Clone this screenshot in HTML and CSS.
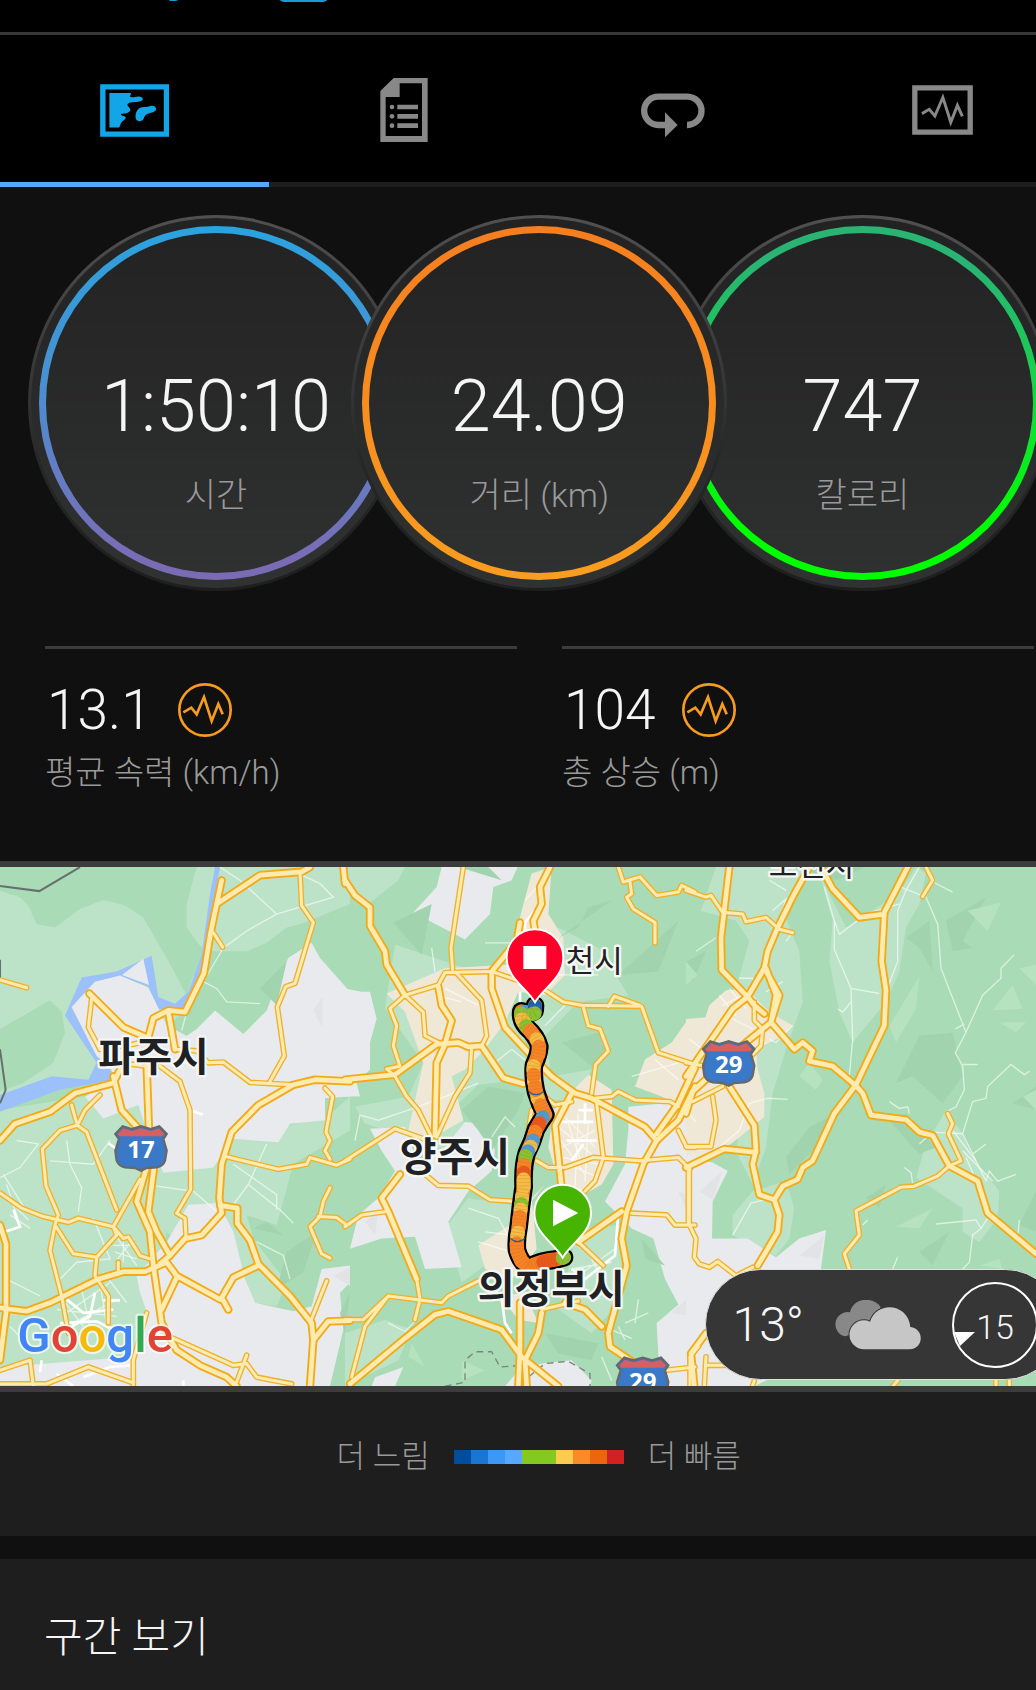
FILE: index.html
```html
<!DOCTYPE html>
<html lang="ko">
<head>
    <meta charset="UTF-8">
    <meta name="viewport" content="width=device-width, initial-scale=1.0">
    <title>활동 상세</title>
    <link rel="stylesheet" href="styles.css">
</head>
<body>
    <header class="top-bar">
        <svg class="top-bar-icons" width="160" height="4" viewBox="0 0 160 4" aria-hidden="true">
            <ellipse cx="4" cy="-1" rx="6" ry="2"/>
            <rect x="110" y="-12" width="49" height="14" rx="5"/>
        </svg>
    </header>

    <nav class="tabs">
        <a href="#map" class="tab active" aria-label="지도">
            <svg width="69" height="53" viewBox="300 252 206 158">
                <path class="line" d="M308.500 260.500h190v141h-190z"/>
                <path class="fill" d="M328 279h64c2 4-3 6-2 12 10 2 18-3 27-2 12 1 14 10 6 14-12 5-30 1-40 8-6 6 10 11 7 20-4 10-18 8-26 10-6 4 6 6 12 9 3 8-8 11-12 17-4 6-4 12-7 15h-29z"/>
                <path class="fill" d="M406 350c0-14 6-24 16-28 12-2 20 0 31-5 10-3 18 7 13 14-6 7-26 8-31 15-5 6-4 17-17 17-8 0-12-5-12-13z"/>
            </svg>
        </a>
        <a href="#stats" class="tab" aria-label="통계">
            <svg width="48" height="64" viewBox="1141 235 142 192">
                <path class="fill" fill-rule="evenodd" d="M1181 235h102v192h-142V274zM1199 251v41h-42v117h109V251z"/>
                <path class="fill" d="M1192 315h62v14h-62zM1192 343h62v14h-62zM1192 371h62v14h-62z"/>
                <circle class="fill" cx="1176" cy="322" r="7"/>
                <circle class="fill" cx="1176" cy="350" r="7"/>
                <circle class="fill" cx="1176" cy="378" r="7"/>
            </svg>
        </a>
        <a href="#laps" class="tab" aria-label="랩">
            <svg width="64" height="54" viewBox="372 250 192 162">
                <path class="loop" d="M446 376h-22a42 42 0 0 1 0-85h88a42 42 0 0 1-2 85"/>
                <path class="fill" d="M444 338l38 38-38 37z"/>
            </svg>
        </a>
        <a href="#charts" class="tab" aria-label="차트">
            <svg width="61" height="50" viewBox="1185 255 184 150">
                <path class="line" d="M1193.500 263.500h167v133h-167z"/>
                <path class="pulse" d="M1215 341l22-13 17 20 24-56 24 75 20-51 15 33"/>
            </svg>
        </a>
    </nav>

    <main>
        <section class="dials">
            <div class="dial dial-time">
                <div class="dial-ring">
                    <div class="dial-value">1:50:10</div>
                    <div class="dial-label">시간</div>
                </div>
            </div>
            <div class="dial dial-distance">
                <div class="dial-ring">
                    <div class="dial-value">24.09</div>
                    <div class="dial-label">거리 (km)</div>
                </div>
            </div>
            <div class="dial dial-calories">
                <div class="dial-ring">
                    <div class="dial-value">747</div>
                    <div class="dial-label">칼로리</div>
                </div>
            </div>
        </section>

        <section class="summary">
            <div class="summary-item">
                <div class="summary-value">
                    13.1
                    <a href="#speed" class="chart-link" aria-label="속력 차트">
                        <svg width="54" height="54" viewBox="527 156 162 162">
                            <circle cx="608" cy="237" r="77"/>
                            <path d="M543 244l24-14 16 20 22-52 23 72 20-51 13 31"/>
                        </svg>
                    </a>
                </div>
                <div class="summary-label">평균 속력 (km/h)</div>
            </div>
            <div class="summary-item">
                <div class="summary-value">
                    104
                    <a href="#ascent" class="chart-link" aria-label="고도 차트">
                        <svg width="54" height="54" viewBox="527 156 162 162">
                            <circle cx="608" cy="237" r="77"/>
                            <path d="M543 244l24-14 16 20 22-52 23 72 20-51 13 31"/>
                        </svg>
                    </a>
                </div>
                <div class="summary-label">총 상승 (m)</div>
            </div>
        </section>

        <section class="map" id="map">
            <svg class="map-canvas" viewBox="0 0 3108 1557" preserveAspectRatio="xMidYMid slice">
                <defs>
                    <!-- road network, drawn twice: casing then core -->
                    <g id="roads-small">
                        <g transform="translate(0 -21) scale(1 1.014)">
                            <path d="M900 35L905 135 940 185 885 365 857 375 832 435 853 580 810 655M640 215L668 258M275 410L265 495 300 560M525 560L590 565 625 600 670 598 750 658 880 665M480 610L540 655 570 740 572 975 530 1045 555 1060 558 1115"/>
                            <path d="M680 878L835 915 920 900 930 880 1010 903 1050 885M975 675L998 700 978 805 990 830 975 860 990 885M0 985L65 1030 130 1055 205 1072 235 1060 340 1085 370 1120 385 1115 420 1170 450 1180M300 695L255 740 232 785 215 725M232 785L180 800 127 855 138 965 175 1050 165 1080M232 785L260 805 350 1035M420 945L340 1085 350 1110 290 1175 220 1165 165 1080 150 1155 185 1290 205 1400M290 1175L285 1230 325 1290 325 1370M355 1190V1218"/>
                            <path d="M0 355L80 378M0 1510L90 1480 100 1557M0 1550L140 1550 265 1500 395 1545M440 1340L400 1480 400 1557M520 1415L700 1495 740 1490 770 1530 875 1550M740 1465L705 1557M980 1245L930 1370M990 970L970 1010 960 1055 930 1085 965 1165 990 1178M955 1055L1010 1058 1040 1080 1050 1075M300 560L400 545 440 535M360 600L440 610"/>
                        </g>
                        <g transform="translate(1035 -21) scale(1 1.014)">
                            <path d="M180 400L235 450 240 520 280 540M355 21L318 260 323 325M135 440L180 400 280 370 300 333 440 330M335 335L410 415 425 520 410 550M135 440L155 490 145 550 165 610 125 618 150 640 185 700 220 740 260 820M380 555L375 630 330 700 275 820"/>
                            <path d="M440 330L500 350 600 385 655 420 710 430 890 433 940 570 1050 605M790 433L808 403 885 430M715 435L730 490 765 500 790 565 752 605 740 690M750 705L800 700 820 685 870 710 975 715 1000 730M820 21L835 65 885 50 935 105 1000 95 1010 75 1050 95M855 65L860 100 845 110 865 145 930 185 930 245"/>
                            <path d="M0 890L150 795 250 830M125 1040L50 1050 0 1085M240 930L280 963 370 965 435 1005 510 1010M600 700L630 725 680 715M560 740L550 800M575 890L610 910 660 910 745 880 885 890M755 720L775 880 750 950 720 980M0 1360L55 1360 130 1290 290 1310 310 1290 400 1245M130 1290L60 1380 20 1530M215 1240L225 1300 210 1360"/>
                            <path d="M700 1130L775 1200M860 1045L965 1050 990 1080 1050 1080M1030 905V1080M885 890L1000 880 1035 915M1000 800L1025 850 1050 850M960 1510L1050 1500M1035 1557V1470L1060 1440M590 1330L700 1305"/>
                        </g>
                        <g transform="translate(2058 -21) scale(1 1.014)">
                            <path d="M0 90L60 110 75 105 110 155 170 160 180 183 240 170 280 205 320 215M205 420V475L230 500 225 550 200 575M720 21L740 60 710 108M785 750L800 780 787 810 825 890 790 905 755 935 685 965 645 968 510 1038 520 1110 475 1165 490 1210M0 848H75L90 770 80 700M20 715L110 670M0 600L60 610"/>
                            <path d="M10 910V1080L30 1120 25 1175 40 1195 70 1205 95 1188 150 1230 200 1205M60 1470L55 1557M60 1495H125M205 1540L195 1570M635 1540L610 1570M930 1540V1570M970 1540V1570"/>
                        </g>
                    </g>
                    <g id="roads-big">
                        <g transform="translate(0 -21) scale(1 1.014)">
                            <path d="M0 830L45 780 150 745 225 690 340 660 360 620M340 640L365 740 430 810M440 610L447 800M440 910L410 1010 450 1100 460 1200 485 1370 530 1450 600 1495 680 1530 710 1557M462 910L445 1040 470 1100 510 1170"/>
                            <path d="M665 60L650 130 632 215 612 335 555 450 505 445 460 468 445 525M650 130L780 45 905 35 930 21M268 395L370 495 440 525M505 450L525 560M1050 655L945 650 880 665 775 725 695 805 665 900 658 1000 665 1045 605 1110 555 1120 510 1170 480 1195M660 1022L712 1030 712 1075 750 1125 775 1195 870 1290 935 1370 940 1420 930 1557M775 1200L700 1235 665 1295 685 1330"/>
                            <path d="M500 1190L530 1230 660 1300M530 1235L485 1330M0 1325L80 1335 150 1310 295 1240 370 1218 435 1218 500 1190M0 1080L18 1135 18 1340 0 1480M940 1420L985 1365 1050 1363M1030 21L1035 70"/>
                        </g>
                        <g transform="translate(1035 -21) scale(1 1.014)">
                            <path d="M0 60L30 105 75 140 75 195 120 270 125 310 180 400M280 375L290 430 320 475 300 545 275 600 270 815M0 650L150 635 275 545 340 540 370 553 410 550 475 645 535 662M615 21L585 80 590 130 565 180 570 210M525 185L515 240 440 330 440 380 480 495 550 570 620 640 690 690 740 705 900 790 935 830 1000 770 1050 670M935 810L1000 720 1050 615"/>
                            <path d="M935 830L895 900 870 970 845 1040 830 1120 845 1200 790 1400 795 1440 870 1490M165 930L110 1000 130 1040 215 1240M680 690L630 785 640 880 650 970M15 1550L180 1415 270 1345 310 1335 470 1390 530 1470 640 1557M525 1310V1450L520 1557M590 1340L580 1400 540 1480 545 1557M700 1130L830 1040M660 1310L720 1330 770 1380"/>
                        </g>
                        <g transform="translate(2058 -21) scale(1 1.014)">
                            <path d="M130 21L105 230 107 325 185 405 205 430 235 455M370 21L325 100 275 200 245 270 235 320 185 405 140 440 0 640M235 320L280 400 255 480 180 540 20 685 0 750M240 320L270 400 255 480 325 560 350 540 380 565 370 595 440 610 510 668 530 690 555 755 660 768 700 805 740 815 790 905 875 950 905 1045 1050 1165"/>
                            <path d="M405 21L440 85 520 170 595 160M665 21L595 155 587 300 600 385 595 490 510 665 445 750 380 890 350 910 335 945 290 965 265 1005M130 670L205 785 210 860 200 900 220 990 265 1005 280 1050 275 1100 215 1200M0 910L115 855 210 865M60 1400L15 1460 25 1557"/>
                        </g>
                    </g>
                    <g id="shield">
                        <path class="shield-body" d="M-77-45L-55-68-28-60 0-68 29-60 55-68 77-45 67-30 77 5 72 35Q66 52 47 55L17 57 0 65-18 57-48 55Q-66 52-73 35L-77 5-66-30z"/>
                        <path class="shield-top" d="M-70-45L-53-62-28-54 0-62 29-54 53-62 70-45 64-38H-64z"/>
                    </g>
                    <path id="pin" d="M0 134C-25 90-85 62-85 0A85 85 0 0 1 85 0C85 62 25 90 0 134z"/>
                    <path id="route" d="M105 76L104 92Q90 104 64 94Q60 118 78 140Q112 170 118 200Q116 225 102 255Q98 290 108 335Q118 370 136 404Q120 426 108 448Q98 485 80 520Q68 560 71 620Q62 680 56 740Q48 780 51 810Q60 845 86 862Q120 842 170 838L192 832"/>
                </defs>

                <rect class="forest" width="3108" height="1557"/>

                <!-- west -->
                <g transform="translate(0 -21) scale(1 1.014)">
                    <path class="meadow" d="M0 90L60 110 85 135 110 190 165 200 240 145 310 118 380 135 430 170 490 250 500 290 540 340 590 345 540 460 300 640 0 740V685L70 660 160 600 195 510 185 450 150 415 0 500zM590 21L560 130V200L600 255 640 270H740L800 245 860 200 900 190 1050 130V21zM0 740L250 700 420 720 500 920 700 820 980 760 1050 700V800L880 900 830 1080 740 1050 760 1120 860 1250 830 1320 700 1300 500 1100 430 1500 0 1557z"/>
                    <path class="forest" d="M590 21L555 130V200L605 260 560 400 500 290 430 170 200 21z"/>
                    <path class="water" d="M645 21H660L640 130 620 300 590 390 560 450 475 440 445 375 365 345 285 360 215 435 290 580 330 620 340 650 180 680 0 745V695L155 640 265 650 290 600 195 460 245 348 350 330 455 283 475 405 525 425 565 390 605 280 630 100z"/>
                    <path class="town" d="M366 340L430 292 447 370zM215 435L285 360 360 342 445 378 475 438 500 490 560 520 590 500 645 445 730 515 800 445 840 340 865 290 935 245 960 290 1050 390V700L975 705V770L870 780 835 835 700 825 640 910 490 925 440 800 415 725 310 765 255 700 345 650 330 610 290 580z"/>
                    <path class="town" d="M565 1020L655 1015 700 1100 735 1240 765 1310 880 1335 935 1320 965 1210 1050 1200V1250L1020 1280 1030 1390 990 1557H0V1500L400 1470 445 1350 420 1280 410 1230 500 1130z"/>
                    <path class="shade" d="M780 380L860 300 830 430zM830 1270L860 1160 950 1100 910 1220zM760 1090L800 1070 850 1110zM1050 1280L1020 1340 1035 1400z"/>
                    <path class="shade-town" d="M940 445L967 405V495zM1000 1230L1050 1205V1260z"/>
                    <path class="border-line" d="M0 77L118 92 240 21M0 295V350M0 560L17 680 0 720"/>
                    <path class="street" d="M660 21L720 60 830 160 740 210 670 260 610 360 650 380 680 420 780 425M830 160L1000 110 960 70 905 45M560 450L545 505M50 830L115 840 60 910 0 940M150 890L280 900 330 830M200 830L210 900 245 970 235 1040M20 1240L120 1290M470 965L580 980 650 1040M700 1020L745 960 800 840M745 960L840 1035 880 1075M770 1130L850 1170 870 1240M700 900L830 990V1035M30 1380L100 1450M10 930L80 1040M340 1100L410 1200M280 1060L330 1180 230 1190 170 1250"/>
                    <path class="street" d="M340 1140H400M345 1160L410 1180M350 1185L400 1120M370 1110V1190M180 1290L250 1380M200 1340L330 1250M220 1370L350 1300M240 1250L270 1380M300 1250L320 1380M170 1330L350 1350M30 1050L90 1090M50 1030L85 1065M20 960L60 1080M310 1220L380 1310"/>
                    <path class="street-bold" d="M285 1280L270 1350 215 1380M200 1300L250 1340 340 1330M310 1303H360M40 1035L60 1085 15 1100M570 740L608 753M325 838L350 855M170 1520L220 1557M250 1530L330 1500 390 1495M125 1480L120 1515M550 1540V1557M180 1370L290 1365 340 1390"/>
                </g>

                <!-- centre -->
                <g transform="translate(1035 -21) scale(1 1.014)">
                    <path class="meadow" d="M0 21H180L160 60 70 130 0 90zM150 250L420 340 530 470 545 560 535 650 400 665 330 730 360 780 300 860 200 820 60 780 30 730 190 700 235 600 120 440zM640 200L760 260 850 400 700 420 600 520 620 640 740 620 700 720 560 700V400zM370 1000L500 1020 510 1080 400 1140 420 1200 350 1250 300 1090zM700 1090L830 1080 830 1300 740 1400 640 1330zM0 1400L120 1360 200 1390 160 1480 0 1557z"/>
                    <path class="town" d="M290 21H518L500 60 445 80 435 160 360 235 205 155 275 80zM0 380L50 390 75 390 95 470 75 540V620L35 660 45 700H0zM75 795L180 790 220 900 300 850 360 775 415 780 450 860 440 920 370 980 310 1070 350 1205 240 1210 210 1115 110 1120 15 1150 40 1050 100 1000 150 920 110 860z"/>
                    <path class="town" d="M850 730L960 720 1090 690V1557H945L935 1370 1000 1315 960 1240 925 1120 860 1090 780 1010 840 900 850 800zM590 1490L680 1480 740 1540 735 1557H480L520 1510zM90 1530L175 1500 150 1557H80z"/>
                    <path class="city" d="M560 40L620 21 610 160 655 230 660 340 600 400 520 390 480 480 420 560 360 620 320 640 355 770 300 800 230 840 190 800 215 690 235 600 180 450 125 395 300 320 490 310 530 150zM730 635L800 680 805 900 770 960 700 1000 640 950 610 850 625 740zM1090 465L1030 470 980 540 900 590 870 670 950 700 1060 760zM600 960L560 1000 575 1150 540 1200 500 1240 420 1210 400 1140 510 1070zM465 1290L540 1280 580 1370 520 1360z"/>
                    <path class="shade" d="M145 185L260 130 230 280zM340 21L470 60 430 21zM640 230L800 120 730 140 700 200zM820 340L1000 180 940 330zM650 540L760 510 800 560 740 610zM350 740L430 670 540 690 520 740 440 860 400 800zM600 1400L760 1430 740 1480 640 1460zM890 1120L960 1200 900 1180z"/>
                    <path class="glade" d="M590 420L640 400 700 420 620 450zM350 1480L420 1510 350 1540zM200 1430L240 1500 190 1470z"/>
                    <path class="shade-town" d="M980 1340L1035 1290V1350zM1000 980L1050 1000 1035 1060zM60 1070L100 1040 90 1110z"/>
                    <path class="street" d="M540 120L610 40M420 245H500M260 260L270 330M300 380L400 430 340 400M270 400L350 420M640 340L760 340M660 430L600 490M450 600L500 560 550 600M30 830L45 755 100 770 190 740 300 700 400 660M440 820L480 760 510 790M860 640L1000 600 1035 580M930 590L1000 650M370 1030L460 1060 500 1130M400 1130L500 1160M420 1100L500 1110M130 1370L180 1395 210 1365M40 1530L130 1440M770 1470L800 1540M840 1370L910 1340M880 1300L870 1370"/>
                    <path class="street" d="M640 790L740 870M650 850L750 800M660 760L750 850M640 820L720 930M700 750L690 970M730 780L720 950M670 900L760 940M650 880L760 900M670 780L710 900M680 1210L800 1190M700 1230L810 1150M740 1180L780 1260M800 1390L860 1415M820 1380L840 1420"/>
                    <path class="street-bold" d="M625 775H745M665 830H755M720 720V780M700 740H745M715 840L680 890M570 150L540 185V230M525 390V420M820 1045L810 1170 720 1240 680 1210M470 1300L480 1370 500 1400"/>
                    <path class="district-line" d="M300 1557L360 1545V1480L390 1455H440L465 1500 530 1495 550 1530 600 1490 670 1483 735 1520V1557"/>
                </g>

                <!-- east -->
                <g transform="translate(2058 -21) scale(1 1.014)">
                    <path class="meadow" d="M45 150L90 21H380L290 150 340 270 350 420 300 560 260 690 240 850 200 960 150 860 200 560 280 480 150 380 190 240 150 180zM400 40L480 200 590 130 650 80 690 21 720 40 700 130 660 200 640 330 600 420 500 540 460 450 430 300 440 180zM780 740L830 810 860 880 940 980 935 1060 880 1130 830 1100V1030L690 940 720 840zM200 980L300 950 325 1030 310 1120 270 1170 140 1110V1050z"/>
                    <path class="town" d="M0 880L80 895 125 920 80 1010 78 1120H185L270 1175 340 1120 420 1095 405 1210V1557H0z"/>
                    <path class="city" d="M0 470L55 475 70 430 120 385 180 380 250 450 320 490 290 520 210 560 215 620 235 690V760L160 820 70 890 0 870z"/>
                    <path class="shade" d="M330 21H540L450 60zM780 180L900 110 830 240 860 260 800 270zM660 230L730 180 740 330 700 260zM700 520L800 510 830 640 770 720 680 640 630 660zM600 760L660 750 750 850 700 870zM300 880L370 790 470 740 380 860 310 930zM980 720L1050 670V740zM1000 1080L1050 980V1100zM700 1160L790 1100 740 1200zM540 1000L600 960 580 1030zM0 300L60 270 20 360z"/>
                    <path class="glade" d="M610 490L700 345 690 440 630 540zM845 150L945 125 905 210zM920 445L980 370 1010 440zM940 480H1020L990 510zM340 640L370 600 410 650 390 680zM630 1085L740 1030 700 1090zM1000 320L1050 310V370zM1010 700L1050 680V740zM880 1200L940 1180 950 1210zM0 300L35 340 0 370z"/>
                    <path class="forest" d="M405 1400H1050V1557H205L260 1530z"/>
                    <path class="shade-town" d="M40 980L110 920 80 1005zM340 1170L415 1110 400 1180z"/>
                    <path class="street" d="M415 80L445 180V265L495 380 500 530 490 640M445 180L460 220 540 160 640 130M495 380L580 395M455 440L470 450 495 420M700 21L660 90 635 150V300L600 390M645 80L720 110 755 190 765 320 840 510 890 400 945 350V320L985 280M840 510L808 570 830 610 835 680 810 730 780 745M808 500L835 485M830 605H875M740 65L800 95M1030 625L1015 635 975 605 905 670 900 705 860 715 830 810 900 950M860 870L900 840M700 840L740 805 830 810M900 950L910 920 935 950 990 930"/>
                    <path class="street" d="M750 1077L870 1065 885 1090 860 1110 850 1190 830 1210M885 1090L905 1060M655 910L675 925 680 955M610 715L640 735 665 730 670 750M190 720L245 705 305 708M190 720L160 800 100 850M140 1110L195 1015 260 1000M30 270L90 230M240 300L300 115 260 150M300 240L320 215M250 60L300 90M100 400L150 460M110 430L170 400M130 380L180 440M120 460L200 500M160 350H200V400M240 390L290 360M250 530L270 540 320 490M10 530L50 560M0 740L30 775M830 860L920 950M840 880L880 970M800 800L870 890M635 1175L620 1210M1000 1065L995 1120M530 1080L545 1065"/>
                </g>

                <g class="casing-small"><use href="#roads-small"/></g>
                <g class="casing-big"><use href="#roads-big"/></g>
                <g class="core-small"><use href="#roads-small"/></g>
                <g class="core-big"><use href="#roads-big"/></g>

                <g transform="translate(0 -21)">
                    <text class="map-city" x="295" y="634">파주시</text>
                    <g transform="translate(423 867)">
                        <use href="#shield"/>
                        <text class="shield-number" x="0" y="28">17</text>
                    </g>
                    <text class="map-brand" x="52" y="1477"><tspan class="g-blue">G</tspan><tspan class="g-red">o</tspan><tspan class="g-yellow">o</tspan><tspan class="g-blue">g</tspan><tspan class="g-green">l</tspan><tspan class="g-red">e</tspan></text>
                </g>

                <g transform="translate(2058 -21)">
                    <text class="map-town" x="248" y="47">포천시</text>
                    <g transform="translate(128 612)">
                        <use href="#shield"/>
                        <text class="shield-number" x="0" y="28">29</text>
                    </g>
                </g>

                <g transform="translate(1035 -21)">
                    <text class="map-town" x="662" y="337">천시</text>
                    <text class="map-city" x="164" y="934">양주시</text>
                    <g transform="translate(893 1561)">
                        <use href="#shield"/>
                        <text class="shield-number" x="0" y="28">29</text>
                    </g>
                </g>

                <!-- recorded track, coloured by pace -->
                <g transform="translate(1500 339)">
                    <use href="#route" class="route-outline"/>
                    <use href="#route" class="route-line"/>
                    <path class="pace pace-sky" d="M90 98L72 96"/>
                    <path class="pace pace-blue" d="M105 78V88"/>
                    <path class="pace pace-green" d="M104 100L98 102M63 100L63 106"/>
                    <path class="pace pace-yellow" d="M66 118L72 128"/>
                    <path class="pace pace-green" d="M78 138L82 142"/>
                    <path class="pace pace-orange" d="M90 152L98 162"/>
                    <path class="pace pace-yellow" d="M110 178L112 182"/>
                    <path class="pace pace-orange" d="M116 200L116 222"/>
                    <path class="pace pace-yellow" d="M101 258L100 270M102 300L103 308M112 352L113 356"/>
                    <path class="pace pace-orange" d="M101 284L101 288M105 320L107 330M122 376L134 402"/>
                    <path class="pace pace-sky" d="M128 412L126 415"/>
                    <path class="pace pace-red" d="M118 430L112 442"/>
                    <path class="pace pace-orange" d="M106 455L104 462"/>
                    <path class="pace pace-sky" d="M99 482L96 490"/>
                    <path class="pace pace-yellow" d="M92 500L88 506"/>
                    <path class="pace pace-sky" d="M84 514L82 518"/>
                    <path class="pace pace-green" d="M77 528L76 534"/>
                    <path class="pace pace-orange" d="M72 556L71 566"/>
                    <path class="pace pace-red" d="M71 578V582"/>
                    <path class="pace pace-yellow" d="M71 598V622M66 650V655"/>
                    <path class="pace pace-green" d="M64 672L63 676"/>
                    <path class="pace pace-yellow" d="M62 688V690"/>
                    <path class="pace pace-orange" d="M59 710L56 742"/>
                    <path class="pace pace-yellow" d="M54 758L52 768"/>
                    <path class="pace pace-orange" d="M50 790L51 812L64 844"/>
                    <path class="pace pace-red" d="M130 846L160 840"/>
                    <path class="pace pace-green" d="M188 834L192 832"/>
                    <path class="pace-line" d="M88 336Q106 352 130 336M33 776Q52 794 73 776"/>
                    <use href="#route" class="route-scallops"/>
                </g>

                <g transform="translate(1035 -21)">
                    <text class="map-city" x="398" y="1328">의정부시</text>

                    <g transform="translate(570 293)">
                        <use href="#pin" class="pin pin-end"/>
                        <path class="pin-mark" d="M-35-35h69v69h-69z"/>
                    </g>
                    <g transform="translate(653 1059)">
                        <use href="#pin" class="pin pin-start"/>
                        <path class="pin-mark" d="M-29-40L47 0-29 40z"/>
                    </g>
                </g>
            </svg>

            <div class="weather">
                <span class="weather-temp">13°</span>
                <svg class="weather-icon" width="88" height="50" viewBox="443 1297 264 148" aria-hidden="true">
                    <path class="cloud-back" d="M480 1405a36 36 0 1 1 14-72c10-46 70-48 92-16l-26 62z"/>
                    <path class="cloud-front" d="M536 1444a43 43 0 0 1 0-87 43 43 0 0 1 18 4c22-66 116-54 121 16 42 4 42 65-2 67z"/>
                </svg>
                <div class="wind">
                    <svg class="wind-dial" width="86" height="86" viewBox="0 0 86 86" aria-hidden="true">
                        <circle cx="43" cy="43" r="42"/>
                        <path d="M2 50H23L8 64z"/>
                    </svg>
                    <span>15</span>
                </div>
            </div>
        </section>

        <section class="legend">
            <span>더 느림</span>
            <div class="pace-scale">
                <i class="step step-1"></i>
                <i class="step step-2"></i>
                <i class="step step-3"></i>
                <i class="step step-4"></i>
                <i class="step step-5"></i>
                <i class="step step-5"></i>
                <i class="step step-6"></i>
                <i class="step step-7"></i>
                <i class="step step-8"></i>
                <i class="step step-9"></i>
            </div>
            <span>더 빠름</span>
        </section>

        <section class="segments">
            <h2>구간 보기</h2>
        </section>
    </main>
</body>
</html>
```
FILE: styles.css
```css
:root {
    --bg: #101010;
    --panel: #1e1e1e;
    --line: #3c3c3c;
    --text: #f5f5f5;
    --muted: #9a9a9a;
    --accent: #12a5e8;
    --orange: #f79b1e;
}

* {
    box-sizing: border-box;
}

body {
    margin: 0;
    min-height: 100vh;
    background: var(--panel);
    color: var(--text);
    font-family: Roboto, "Noto Sans CJK KR", sans-serif;
    font-weight: 300;
    overflow-x: hidden;
}

.top-bar {
    height: 35px;
    padding-left: 169px;
    background: #000;
    border-bottom: 3px solid #383838;
}

.top-bar-icons {
    display: block;
    fill: #1b9ad6;
}

/* tabs */
.tabs {
    display: flex;
    height: 152px;
    background: #000;
    overflow: hidden;
}

.tab {
    flex: 0 0 26%;
    display: flex;
    align-items: center;
    justify-content: center;
    padding-top: 3px;
    border-bottom: 5px solid var(--panel);
    color: #888;
}

.tab.active {
    color: var(--accent);
    border-bottom-color: #58a6f8;
}

.tab .fill {
    fill: currentColor;
}

.tab .line,
.tab .loop,
.tab .pulse {
    fill: none;
    stroke: currentColor;
    stroke-width: 16;
}

.tab .loop {
    stroke-width: 19;
}

.tab .pulse {
    stroke-width: 9;
}

/* dials */
.dials {
    display: flex;
    padding: 28px 0 55px;
    background: var(--bg);
    overflow: hidden;
}

.dial {
    flex: 0 0 auto;
    width: 36.3%;
    margin-left: -5.1%;
    aspect-ratio: 1;
    padding: 8px;
    border: 3px solid transparent;
    border-radius: 50%;
    background:
        linear-gradient(#222, #303231) padding-box,
        linear-gradient(#505050, #333 50%, #262727 65%, #1e1e1e) border-box;
}

.dial:first-child {
    margin-left: 2.7%;
}

.dial-ring {
    display: flex;
    flex-direction: column;
    align-items: center;
    justify-content: center;
    height: 100%;
    padding-top: 76px;
    border: 7px solid transparent;
    border-radius: 50%;
}

.dial-time .dial-ring {
    background:
        linear-gradient(#232323, #2f3030) padding-box,
        linear-gradient(#2aa3df, #4b8fd0 45%, #7b6bb5 95%) border-box;
}

.dial-distance {
    position: relative;
    z-index: 1;
}

.dial-distance .dial-ring {
    background:
        linear-gradient(#232323, #2f3030) padding-box,
        linear-gradient(#f57e20, #f99d1f) border-box;
}

.dial-calories .dial-ring {
    background:
        linear-gradient(#232323, #2f3030) padding-box,
        linear-gradient(#29b473 10%, #1fc45f 30%, #0f0 85%) border-box;
}

.dial-value {
    font-size: 72px;
    line-height: 88px;
}

.dial-label {
    font-size: 34px;
    line-height: 48px;
    margin-top: 20px;
    color: var(--muted);
}

/* summary */
.summary {
    display: grid;
    grid-template-columns: 1fr 1fr;
    gap: 45px;
    padding: 0 2px 66px 45px;
    background: var(--bg);
}

.summary-item {
    padding-top: 30px;
    border-top: 3px solid var(--line);
}

.summary-value {
    display: flex;
    align-items: center;
    gap: 26px;
    padding-left: 2px;
    font-size: 55px;
    line-height: 62px;
}

.chart-link {
    display: flex;
}

.chart-link svg {
    fill: none;
    stroke: var(--orange);
    stroke-width: 8;
}

.summary-label {
    margin-top: 9px;
    font-size: 33px;
    line-height: 45px;
    color: var(--muted);
}

/* map */
.map {
    position: relative;
    border-top: 6px solid var(--line);
    border-bottom: 6px solid var(--line);
    overflow: hidden;
}

.map-canvas {
    display: block;
    width: 100%;
    height: auto;
}

.forest { fill: #a9dbb6; }
.meadow { fill: #bce3c8; }
.town { fill: #e8eaed; }
.city { fill: #f0e8d7; }
.water { fill: #9cc0f9; }
.shade { fill: #a1d4ae; }
.glade { fill: #b6e2bd; }
.shade-town { fill: #e1e3e5; }

.border-line,
.street,
.street-bold,
.district-line {
    fill: none;
}

.border-line {
    stroke: #68706f;
    stroke-width: 6;
}

.street {
    stroke: #fff;
    stroke-opacity: 0.6;
    stroke-width: 4;
}

.street-bold {
    stroke: #fff;
    stroke-width: 8;
}

.district-line {
    stroke: #7c8580;
    stroke-width: 4;
    stroke-dasharray: 20 14;
}

.casing-small,
.casing-big,
.core-small,
.core-big {
    fill: none;
    stroke-linecap: round;
    stroke-linejoin: round;
}

.casing-small {
    stroke: #efb02b;
    stroke-width: 17;
}

.casing-big {
    stroke: #f2aa17;
    stroke-width: 25;
}

.core-small {
    stroke: #ffebb0;
    stroke-width: 9;
}

.core-big {
    stroke: #ffebb0;
    stroke-width: 14;
}

.map-city,
.map-town {
    font-family: "Noto Sans CJK KR", sans-serif;
    font-weight: 700;
    font-size: 120px;
    fill: #202124;
    stroke: #f4f7f4;
    stroke-width: 14;
    stroke-linejoin: round;
    paint-order: stroke;
}

.map-town {
    font-weight: 400;
    font-size: 93px;
}

.map-brand {
    font-weight: 500;
    font-size: 147px;
    stroke: #fff;
    stroke-opacity: 0.7;
    stroke-width: 12;
    stroke-linejoin: round;
    paint-order: stroke;
}

.g-blue { fill: #4285f4; }
.g-red { fill: #e14435; }
.g-yellow { fill: #f6b90c; }
.g-green { fill: #34a853; }

.shield-body {
    fill: #3a78c8;
    stroke: #66686b;
    stroke-width: 7;
}

.shield-top {
    fill: #d65f62;
}

.shield-number {
    font-family: "Open Sans", sans-serif;
    font-weight: 700;
    font-size: 72px;
    fill: #fff;
    text-anchor: middle;
}

.route-outline,
.route-line,
.route-scallops,
.pace,
.pace-line {
    fill: none;
    stroke-linecap: round;
    stroke-linejoin: round;
}

.route-outline {
    stroke: #000;
    stroke-width: 56;
}

.route-line {
    stroke: #f47f22;
    stroke-width: 42;
}

.route-scallops {
    stroke: #c4601a;
    stroke-opacity: 0.3;
    stroke-width: 38;
    stroke-linecap: butt;
    stroke-dasharray: 2 8;
}

.pace {
    stroke-width: 42;
}

.pace-blue { stroke: #1862b4; }
.pace-sky { stroke: #4b9bd8; }
.pace-green { stroke: #86c232; }
.pace-yellow { stroke: #f3bc45; }
.pace-orange { stroke: #f58426; }
.pace-red { stroke: #e8571c; }

.pace-line {
    stroke: #2c5f8c;
    stroke-width: 4;
}

.pin {
    stroke: #fff;
    stroke-width: 6;
}

.pin-end { fill: #ff002b; }
.pin-start { fill: #46b400; }
.pin-mark { fill: #fff; }

.weather {
    position: absolute;
    right: -25px;
    bottom: 6px;
    display: flex;
    align-items: center;
    height: 111px;
    padding: 0 22px 0 27px;
    border: 1px solid #e0e0e0;
    border-radius: 56px;
    background: #363636;
}

.weather-temp {
    font-size: 48px;
    line-height: 56px;
}

.weather-icon {
    margin: 0 31px 0 29px;
}

.cloud-back { fill: #888; }

.cloud-front {
    fill: #c6c6c6;
    stroke: #363636;
    stroke-width: 6;
    paint-order: stroke;
}

.wind {
    display: grid;
    place-items: center;
    font-size: 34px;
    line-height: 40px;
}

.wind > * {
    grid-area: 1 / 1;
}

.wind span {
    padding-top: 4px;
}

.wind-dial circle {
    fill: none;
    stroke: #fff;
    stroke-width: 2;
}

.wind-dial path {
    fill: #fff;
}

/* pace legend */
.legend {
    display: flex;
    align-items: center;
    justify-content: center;
    gap: 24px;
    height: 144px;
    padding: 0 0 14px 4%;
    background: var(--panel);
    font-size: 31px;
    line-height: 44px;
    color: var(--muted);
}

.pace-scale {
    display: flex;
}

.step {
    width: 17px;
    height: 14px;
}

.step-1 { background: #004c9f; }
.step-2 { background: #1976d2; }
.step-3 { background: #3d97f5; }
.step-4 { background: #57a8ff; }
.step-5 { background: #84c91f; }
.step-6 { background: #fbcc4f; }
.step-7 { background: #fa8b28; }
.step-8 { background: #ec660d; }
.step-9 { background: #d32020; }

.segments {
    padding: 49px 44px 20px;
    border-top: 23px solid var(--bg);
    background: var(--panel);
}

.segments h2 {
    margin: 0;
    font-size: 42px;
    font-weight: 300;
    line-height: 60px;
}
```
